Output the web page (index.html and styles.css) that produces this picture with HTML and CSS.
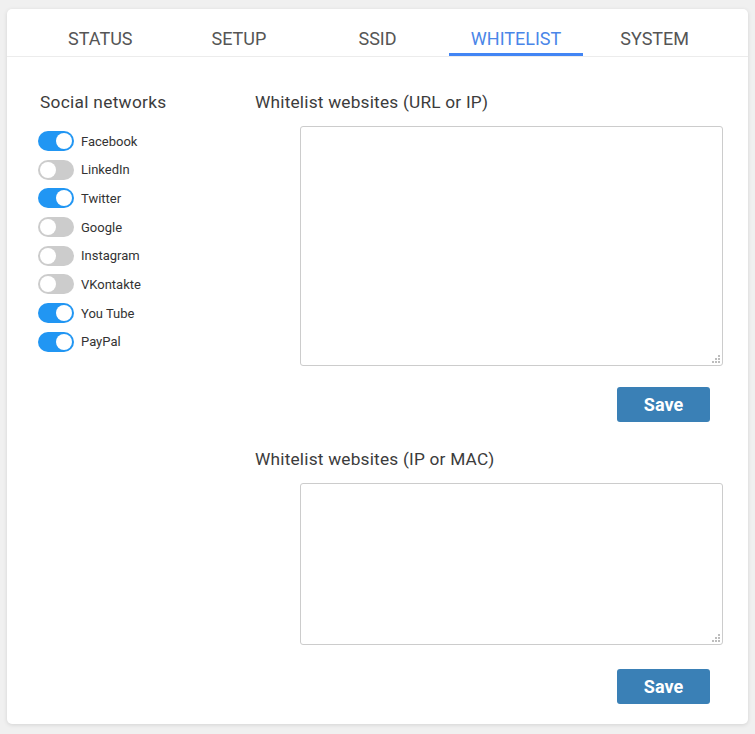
FILE: index.html
```html
<!DOCTYPE html>
<html>
<head>
<meta charset="utf-8">
<link rel="stylesheet" href="styles.css">
</head>
<body>
<div class="card">
  <nav class="tabs">
    <div class="tab">STATUS</div>
    <div class="tab">SETUP</div>
    <div class="tab">SSID</div>
    <div class="tab active">WHITELIST</div>
    <div class="tab">SYSTEM</div>
  </nav>
  <div class="content">
    <section class="left">
      <h2 class="heading social">Social networks</h2>
      <ul class="toggles">
        <li class="row"><span class="switch on"></span><span class="label">Facebook</span></li>
        <li class="row"><span class="switch"></span><span class="label">LinkedIn</span></li>
        <li class="row"><span class="switch on"></span><span class="label">Twitter</span></li>
        <li class="row"><span class="switch"></span><span class="label">Google</span></li>
        <li class="row"><span class="switch"></span><span class="label">Instagram</span></li>
        <li class="row"><span class="switch"></span><span class="label">VKontakte</span></li>
        <li class="row"><span class="switch on"></span><span class="label">You Tube</span></li>
        <li class="row"><span class="switch on"></span><span class="label">PayPal</span></li>
      </ul>
    </section>
    <section class="right">
      <h2 class="heading">Whitelist websites (URL or IP)</h2>
      <div class="field field-url">
        <textarea class="box"></textarea>
        <svg class="grip" width="9" height="9" viewBox="0 0 9 9"><rect x="7" y="1" width="2" height="2"/><rect x="4" y="4" width="2" height="2"/><rect x="7" y="4" width="2" height="2"/><rect x="1" y="7" width="2" height="2"/><rect x="4" y="7" width="2" height="2"/><rect x="7" y="7" width="2" height="2"/></svg>
      </div>
      <div class="actions"><button class="save">Save</button></div>
      <h2 class="heading second">Whitelist websites (IP or MAC)</h2>
      <div class="field field-mac">
        <textarea class="box"></textarea>
        <svg class="grip" width="9" height="9" viewBox="0 0 9 9"><rect x="7" y="1" width="2" height="2"/><rect x="4" y="4" width="2" height="2"/><rect x="7" y="4" width="2" height="2"/><rect x="1" y="7" width="2" height="2"/><rect x="4" y="7" width="2" height="2"/><rect x="7" y="7" width="2" height="2"/></svg>
      </div>
      <div class="actions last"><button class="save">Save</button></div>
    </section>
  </div>
</div>
</body>
</html>
```
FILE: styles.css
```css
* { box-sizing: border-box; }
html, body { margin: 0; padding: 0; }
body {
  background: #f0f0f0;
  font-family: Roboto, "Liberation Sans", Arial, sans-serif;
  width: 755px;
  height: 734px;
  padding: 9px 7px 0 7px;
}
.card {
  width: 741px;
  height: 715px;
  background: #fff;
  border-radius: 5px;
  box-shadow: 0 1px 4px rgba(0,0,0,0.12);
}
.tabs {
  display: grid;
  grid-template-columns: repeat(5, 1fr);
  padding: 0 24px;
  border-bottom: 1px solid #ececec;
}
.tab {
  text-align: center;
  font-size: 18px;
  line-height: 20px;
  color: #555;
  padding: 20px 0 4px;
  border-bottom: 3px solid transparent;
  margin: 0 2px;
}
.tab.active {
  color: #4a86e8;
  border-bottom-color: #4285f4;
}
.content {
  display: flex;
  padding: 35px 25px 20px 31px;
}
.left { width: 217px; flex: none; }
.right { flex: 1; display: flex; flex-direction: column; }
.heading {
  margin: 0;
  font-size: 17.3px;
  font-weight: 400;
  line-height: 20px;
  color: #3c3c3c;
  letter-spacing: 0.2px;
}
.social { margin-left: 2px; letter-spacing: 0.3px; }
.toggles {
  list-style: none;
  margin: 19px 0 0;
  padding: 0;
  display: flex;
  flex-direction: column;
  gap: 8.7px;
}
.row { display: flex; align-items: center; height: 20px; }
.switch {
  position: relative;
  width: 36px;
  height: 20px;
  border-radius: 10px;
  background: #cccccc;
  flex: none;
}
.switch::after {
  content: "";
  position: absolute;
  top: 2px;
  left: 2px;
  width: 16px;
  height: 16px;
  border-radius: 50%;
  background: #fff;
}
.switch.on { background: #2196f3; }
.switch.on::after { left: 18px; }
.label {
  margin-left: 7px;
  font-size: 13px;
  color: #333;
}
.field {
  position: relative;
  margin: 14px 0 0 45px;
  width: 423px;
}
.field-url { height: 240px; }
.field-mac { height: 162px; margin-top: 14px; }
.box {
  display: block;
  width: 100%;
  height: 100%;
  border: 1px solid #cccccc;
  border-radius: 3px;
  background: #fff;
  font-family: inherit;
  resize: none;
}
.grip {
  position: absolute;
  right: 3px;
  bottom: 3px;
  fill: #bdbdbd;
}
.actions { display: flex; justify-content: flex-end; padding-right: 13px; margin-top: 21px; }
.actions.last { margin-top: 24px; }
.save {
  width: 93px;
  height: 35px;
  border: none;
  border-radius: 3px;
  background: #3a80b6;
  color: #fff;
  font-family: inherit;
  font-weight: 700;
  font-size: 18px;
}
.second { margin-top: 27px; }
```
